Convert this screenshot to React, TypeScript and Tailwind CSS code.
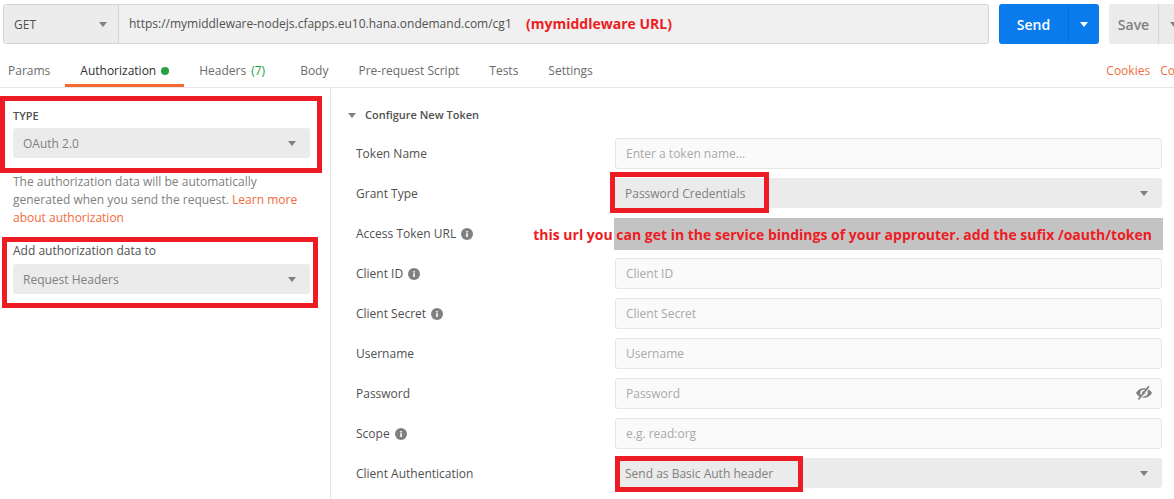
import React from "react";

function Caret({ className = "" }: { className?: string }) {
  return (
    <svg width="8" height="5" viewBox="0 0 8 5" className={`shrink-0 ${className}`} aria-hidden="true">
      <path d="M0 0h8L4 5z" fill="currentColor" />
    </svg>
  );
}

function InfoIcon() {
  return (
    <svg width="12" height="12" viewBox="0 0 12 12" className="shrink-0 text-[#808080]" aria-hidden="true">
      <circle cx="6" cy="6" r="6" fill="currentColor" />
      <path d="M5 3h2v1.4H5zM5 5.200h2V9H5z" fill="#e6e6e6" />
    </svg>
  );
}

function EyeOffIcon() {
  return (
    <svg width="16" height="16" viewBox="0 0 16 16" aria-hidden="true">
      <path
        fillRule="evenodd"
        fill="currentColor"
        d="M0 8C1.6 4.9 4.4 3.3 8 3.3S14.400 4.900 16 8c-1.600 3.100-4.400 4.700-8 4.700S1.600 11.100 0 8zM4.300 8a3.700 3.300 0 1 0 7.400 0a3.700 3.300 0 1 0-7.400 0z"
      />
      <circle cx="8" cy="8" r="2" fill="currentColor" />
      <path d="M3.600 15.300L14 2" stroke="#fafafa" strokeWidth="1.200" />
      <path d="M2.400 14.500L13 1.200" stroke="currentColor" strokeWidth="1.700" />
    </svg>
  );
}

function Select({ id, value }: { id: string; value: string }) {
  return (
    <div className="relative w-full">
      <select
        id={id}
        className="block h-[30px] w-full appearance-none rounded-[3px] bg-[#ebebeb] pt-[2px] pr-8 pl-[10px] text-[#808080] outline-none"
      >
        <option>{value}</option>
      </select>
      <Caret className="pointer-events-none absolute top-[13px] right-[14px] text-[#808080]" />
    </div>
  );
}

const highlight = "pointer-events-none absolute border-[5px] border-[#ed1c24]";
const note =
  "pointer-events-none absolute text-[14px] font-bold whitespace-nowrap text-[#ed1c24]";
const field =
  "block h-[31px] w-full rounded-[3px] border border-[#e6e6e6] bg-[#fafafa] px-[10px] text-[#505050] outline-none placeholder:text-[#a9a9a9]";

function Row({ id, label, info, children }: { id: string; label: string; info?: boolean; children: React.ReactNode }) {
  return (
    <div className="flex h-10 items-start">
      <label htmlFor={id} className="flex h-8 w-[259px] shrink-0 items-center gap-[5px] text-[#505050]">
        {label}
        {info && <InfoIcon />}
      </label>
      <div className="relative min-w-0 flex-1">{children}</div>
    </div>
  );
}

const tab = "flex h-[43px] items-center border-b-3 border-transparent px-[15px] pt-[13px]";

export default function App() {
  return (
    <div className="flex min-h-screen flex-col overflow-x-clip bg-white font-['Open_Sans','Noto_Sans',sans-serif] text-[12px] leading-[18px] text-[#505050]">
      <div className="-mr-[15px] flex gap-[10px] pt-1 pl-[3px]">
        <div className="relative flex h-10 min-w-0 flex-1 rounded-[3px] border border-[#d4d4d4] bg-[#f0f0f0]">
          <div className="relative w-[115px] shrink-0 border-r border-[#d4d4d4] bg-[#ececec]">
            <select aria-label="Method" className="h-full w-full appearance-none pt-px pl-[10px] text-[#505050] outline-none">
              <option>GET</option>
            </select>
            <Caret className="pointer-events-none absolute top-[17px] right-[11px] text-[#808080]" />
          </div>
          <input
            aria-label="Request URL"
            defaultValue="https://mymiddleware-nodejs.cfapps.eu10.hana.ondemand.com/cg1"
            className="min-w-0 flex-1 bg-transparent px-[10px] text-[#505050] outline-none"
          />
          <span className={`${note} top-[10px] left-[522px]`}>(mymiddleware URL)</span>
        </div>
        <div className="flex h-10 w-[100px] shrink-0 overflow-hidden rounded-[3px] bg-[#097bed] text-white">
          <button className="flex-1 pt-[2px] text-[14px] font-semibold">Send</button>
          <button aria-label="Send options" className="flex w-[31px] items-center justify-center border-l border-[#0a6fd3]">
            <Caret />
          </button>
        </div>
        <div className="flex h-10 w-[80px] shrink-0 overflow-hidden rounded-[3px] bg-[#ebebeb] text-[#808080]">
          <button className="flex-1 pt-[2px] text-[14px] font-semibold">Save</button>
          <button aria-label="Save options" className="flex w-[31px] items-center justify-center border-l border-[#d4d4d4]">
            <Caret />
          </button>
        </div>
      </div>

      <div className="flex h-11 border-b border-[#e6e6e6]">
        <nav className="-ml-[7px] flex text-[#6b6b6b]">
          <button className={tab}>Params</button>
          <button className="flex h-[43px] items-center gap-[5px] border-b-3 border-[#f76935] px-[15px] pt-[13px] text-[#303030]">
            Authorization
            <span className="h-2 w-2 rounded-full bg-[#26a044]" />
          </button>
          <button className={tab}>
            Headers <span className="px-[5px] text-[#26a044]">(7)</span>
          </button>
          <button className={tab}>Body</button>
          <button className={tab}>Pre-request Script</button>
          <button className={tab}>Tests</button>
          <button className={tab}>Settings</button>
        </nav>
        <div className="-mr-[15px] ml-auto flex items-center gap-[10px] pt-[11px] text-[#f26b3a]">
          <a href="#cookies">Cookies</a>
          <a href="#code">Code</a>
        </div>
      </div>

      <div className="flex flex-1">
        <aside className="w-[331px] shrink-0 border-r border-[#e6e6e6] pt-[19px] pr-5 pl-[13px]">
          <div className="relative">
            <label htmlFor="type" className="mb-[3px] block text-[11px] font-semibold">
              TYPE
            </label>
            <Select id="type" value="OAuth 2.0" />
            <div className={`${highlight} -top-[11px] -right-3 -bottom-[15px] -left-[13px]`} />
          </div>
          <p className="mt-[15px] text-[#808080]">
            The authorization data will be automatically generated when you send the request.{" "}
            <a href="#learn" className="text-[#f26b3a]">
              Learn more about authorization
            </a>
          </p>
          <div className="relative mt-[15px]">
            <label htmlFor="target" className="mb-[4px] block">
              Add authorization data to
            </label>
            <Select id="target" value="Request Headers" />
            <div className={`${highlight} -top-[5px] -right-2 -bottom-[14px] -left-[11px]`} />
          </div>
        </aside>

        <main className="min-w-0 flex-1 pt-[18px] pr-3 pl-[25px]">
          <button className="mb-[14px] -ml-2 flex items-center gap-[9px] text-[11px] leading-[18px] font-semibold">
            <Caret className="text-[#808080]" />
            Configure New Token
          </button>
          <Row id="name" label="Token Name">
            <input id="name" placeholder="Enter a token name..." className={field} />
          </Row>
          <Row id="grant" label="Grant Type">
            <Select id="grant" value="Password Credentials" />
            <div className={`${highlight} -top-[6px] -left-[5px] h-[41px] w-[159px]`} />
          </Row>
          <Row id="url" label="Access Token URL" info>
            <input id="url" className="-mx-px block h-8 w-[calc(100%+2px)] bg-[#c3c3c3] outline-none" />
            <span className={`${note} top-[8px] right-[10px]`}>
              this url you can get in the service bindings of your approuter. add the sufix /oauth/token
            </span>
          </Row>
          <Row id="client" label="Client ID" info>
            <input id="client" placeholder="Client ID" className={field} />
          </Row>
          <Row id="secret" label="Client Secret" info>
            <input id="secret" placeholder="Client Secret" className={field} />
          </Row>
          <Row id="user" label="Username">
            <input id="user" placeholder="Username" className={field} />
          </Row>
          <Row id="password" label="Password">
            <input id="password" type="password" placeholder="Password" className={field} />
            <button aria-label="Show password" className="absolute top-[7px] right-[10px] text-[#808080]">
              <EyeOffIcon />
            </button>
          </Row>
          <Row id="scope" label="Scope" info>
            <input id="scope" placeholder="e.g. read:org" className={field} />
          </Row>
          <Row id="auth" label="Client Authentication">
            <Select id="auth" value="Send as Basic Auth header" />
            <div className={`${highlight} -top-[2px] left-0 h-9 w-[188px]`} />
          </Row>
        </main>
      </div>
    </div>
  );
}
